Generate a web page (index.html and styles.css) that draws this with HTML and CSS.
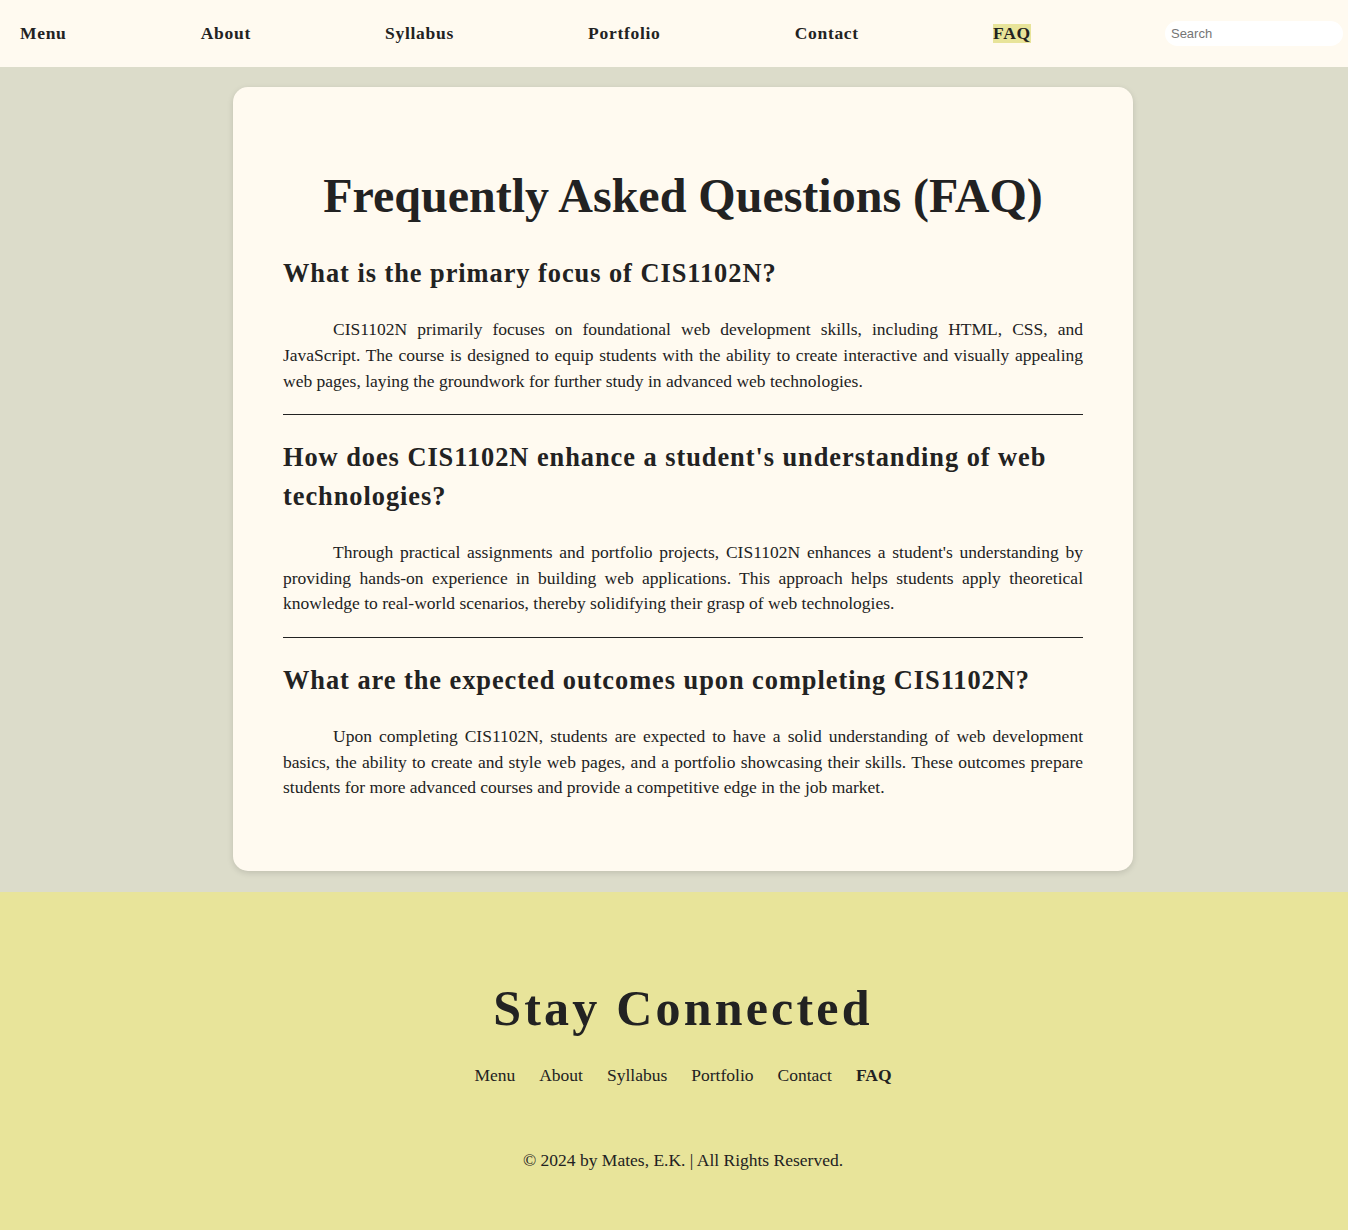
FILE: index.html
```html
<!DOCTYPE html>
<html lang="en">
<head>
<meta charset="utf-8">
<title>FAQ</title>
<link rel="stylesheet" href="styles.css">
</head>
<body>
<header class="site-header">
  <nav class="top-nav">
    <a href="#" class="nav-link">Menu</a>
    <a href="#" class="nav-link">About</a>
    <a href="#" class="nav-link">Syllabus</a>
    <a href="#" class="nav-link">Portfolio</a>
    <a href="#" class="nav-link">Contact</a>
    <a href="#" class="nav-link active">FAQ</a>
    <input type="text" class="search" placeholder="Search">
  </nav>
</header>
<main class="main">
  <section class="card">
    <h1 class="title">Frequently Asked Questions (FAQ)</h1>
    <h2 class="question">What is the primary focus of CIS1102N?</h2>
    <p class="answer">CIS1102N primarily focuses on foundational web development skills, including HTML, CSS, and JavaScript. The course is designed to equip students with the ability to create interactive and visually appealing web pages, laying the groundwork for further study in advanced web technologies.</p>
    <hr class="divider">
    <h2 class="question">How does CIS1102N enhance a student's understanding of web technologies?</h2>
    <p class="answer">Through practical assignments and portfolio projects, CIS1102N enhances a student's understanding by providing hands-on experience in building web applications. This approach helps students apply theoretical knowledge to real-world scenarios, thereby solidifying their grasp of web technologies.</p>
    <hr class="divider">
    <h2 class="question">What are the expected outcomes upon completing CIS1102N?</h2>
    <p class="answer">Upon completing CIS1102N, students are expected to have a solid understanding of web development basics, the ability to create and style web pages, and a portfolio showcasing their skills. These outcomes prepare students for more advanced courses and provide a competitive edge in the job market.</p>
  </section>
</main>
<footer class="site-footer">
  <h2 class="footer-title">Stay Connected</h2>
  <nav class="footer-nav">
    <a href="#" class="footer-link">Menu</a>
    <a href="#" class="footer-link">About</a>
    <a href="#" class="footer-link">Syllabus</a>
    <a href="#" class="footer-link">Portfolio</a>
    <a href="#" class="footer-link">Contact</a>
    <a href="#" class="footer-link current">FAQ</a>
  </nav>
  <p class="copyright">&copy; 2024 by Mates, E.K. | All Rights Reserved.</p>
</footer>
</body>
</html>
```

FILE: styles.css
```css
* { box-sizing: border-box; }

html, body {
  margin: 0;
  padding: 0;
}

body {
  font-family: "Liberation Serif", "Times New Roman", serif;
  color: #222222;
  background: #dcdcca;
}

a {
  color: #222222;
  text-decoration: none;
}

.site-header {
  background: #fffaf0;
  height: 67px;
}

.top-nav {
  height: 100%;
  display: flex;
  align-items: center;
  justify-content: space-between;
  padding: 0 5px 0 20px;
}

.nav-link {
  font-weight: bold;
  font-size: 17.5px;
  line-height: 19px;
  letter-spacing: 0.7px;
  margin-top: -1px;
}

.nav-link.active {
  background: #e8e49a;
}

.search {
  width: 178px;
  height: 25px;
  border: none;
  border-radius: 13px;
  background: #ffffff;
  padding: 0 6px;
  font-family: "Liberation Sans", Arial, sans-serif;
  font-size: 13px;
  color: #333;
  outline: none;
}

.search::placeholder {
  color: #757575;
}

.main {
  padding: 20px 0 21px 18px;
}

.card {
  width: 900px;
  margin: 0 auto;
  background: #fffaf0;
  border-radius: 15px;
  box-shadow: 0 2px 6px rgba(0, 0, 0, 0.13);
  padding: 50px 50px 70px;
}

.title {
  font-size: 48px;
  line-height: 56px;
  text-align: center;
  margin: 31px 0 30px;
}

.question {
  font-size: 26.4px;
  line-height: 38.4px;
  letter-spacing: 0.95px;
  margin: 0;
}

.answer {
  font-size: 17.5px;
  line-height: 25.6px;
  text-align: justify;
  text-indent: 50px;
  margin: 25px 0 0;
}

.divider {
  border: none;
  border-top: 1px solid #222222;
  margin: 20px 0 23px;
  height: 0;
}

.site-footer {
  background: #e8e49a;
  padding: 88px 0 58px 18px;
  text-align: center;
}

.footer-title {
  font-size: 50px;
  line-height: 56px;
  letter-spacing: 3.2px;
  margin: 0;
}

.footer-nav {
  display: flex;
  justify-content: center;
  gap: 24px;
  margin-top: 27px;
}

.footer-link {
  font-size: 17.5px;
  line-height: 25.6px;
}

.footer-link.current {
  font-weight: bold;
}

.copyright {
  font-size: 17.5px;
  line-height: 25.6px;
  margin: 59px 0 0;
}
```
